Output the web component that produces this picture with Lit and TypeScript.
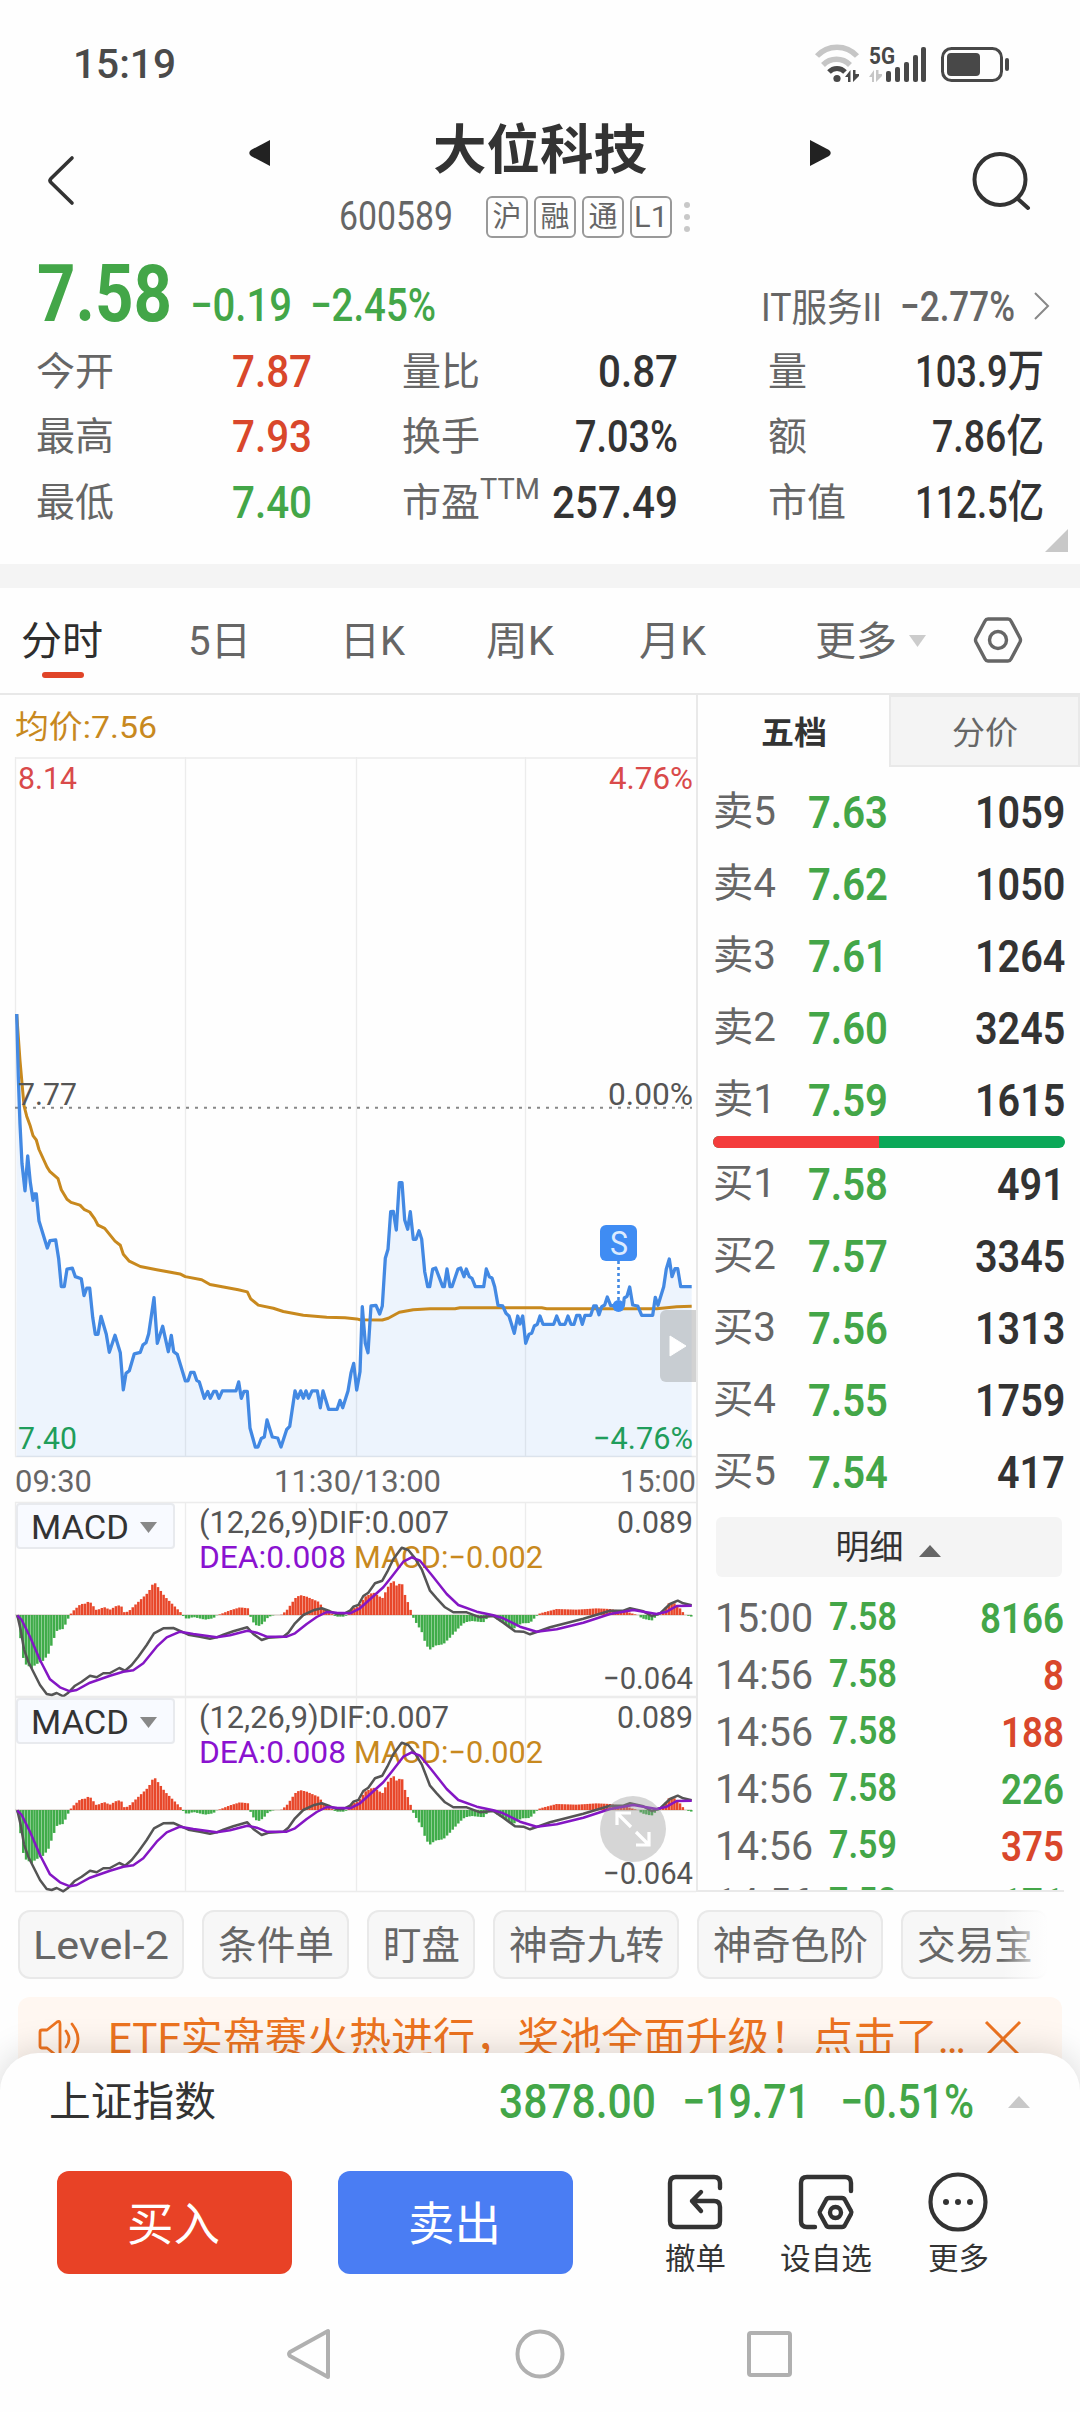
import { LitElement, html, svg, css } from "lit";
import { customElement, property } from "lit/decorators.js";

type Pt = [number, number];

/** Single line of text condensed or widened to a given advance width. */
@customElement("fit-text")
class FitText extends LitElement {
  @property() text = "";
  @property({ type: Number }) w = 0;

  static styles = css`
    :host { display: inline-block; white-space: nowrap; }
    .t { display: inline-block; transform-origin: 0 50%; white-space: pre; }
  `;

  updated() {
    const el = this.renderRoot.querySelector(".t") as HTMLElement;
    el.style.transform = "none";
    if (!this.w) return;
    this.style.width = "auto";
    const natural = el.getBoundingClientRect().width;
    this.style.width = `${this.w}px`;
    if (natural > 0) el.style.transform = `scaleX(${this.w / natural})`;
  }

  render() {
    return html`<span class="t">${this.text}</span>`;
  }
}

const fit = (text: string, w: number, cls = "") =>
  html`<fit-text class=${cls} .text=${text} .w=${w}></fit-text>`;

/* ---- chart series ---- */

const pairs = (s: string): Pt[] =>
  s.trim().split(/\s+/).map((p) => p.split(",").map(Number) as Pt);

const place = (pts: Pt[], ox: number, oy: number, kx: number, ky: number): Pt[] =>
  pts.map(([x, y]) => [ox + x * kx, oy + y * ky]);

const path = (pts: Pt[]) =>
  pts.map(([x, y], i) => `${i ? "L" : "M"}${x.toFixed(1)} ${y.toFixed(1)}`).join("");

const MORNING = pairs(`50,612 55,730 60,820 66,895 75,946 83,880 91,930 99,964 103,952 109,952 117,1003 142,1054 150,1040
 167,1039 176,1075 184,1127 193,1127 201,1094 217,1092 226,1108 244,1112 252,1144 260,1130 269,1130 278,1185 286,1217
 294,1217 303,1183 319,1217 328,1251 345,1219 361,1252 370,1322 378,1291 388,1286 403,1254 421,1251 429,1237 438,1233
 446,1216 462,1148 472,1234 488,1202 505,1250 514,1219 521,1250 532,1255 556,1305 564,1305 572,1289 582,1289 590,1304
 598,1307 613,1338 623,1325 631,1338 641,1325 649,1325 657,1338 667,1324 708,1324 716,1307 724,1338 732,1325 742,1325
 750,1394 766,1430 774,1430 784,1414 793,1411 801,1379 817,1411 833,1413 843,1430 860,1397 869,1391 885,1324 893,1338
 902,1324 910,1338 918,1324 926,1338 936,1324 952,1324 961,1356 969,1324 986,1359 1011,1359 1020,1342 1028,1356
 1044,1324 1053,1290 1061,1272`);

const AFTERNOON = pairs(`50,750 60,695 67,500 76,610 84,638 93,498 108,496 119,522 127,498 136,355 144,328 152,215 160,214
 169,270 178,128 186,128 194,240 203,268 211,215 220,298 228,298 237,272 245,298 254,395 263,440 269,440 278,387 287,384
 308,440 313,440 321,387 330,440 336,440 354,387 362,384 372,410 379,387 388,410 396,415 406,440 431,440 439,387 448,410
 456,414 464,440 474,496 488,498 498,520 507,528 523,580 533,528 540,552 548,528 557,610 567,583 575,580 583,558 592,553
 600,528 609,553 641,553 650,528 660,553 675,553 684,528 693,553 702,553 710,526 719,526 727,553 735,526 752,526 761,498
 769,498 777,524 785,500 794,495 802,471 812,497 850,497 853,474 861,469 869,441 878,495 893,498 905,526 938,526 946,472
 954,496 971,440 979,387 988,357 996,410 1005,386 1013,386 1022,440 1055,440`);

const AVG_AM = pairs(`50,612 60,700 72,785 80,805 90,822 99,842 109,850 117,868 141,901 150,910 174,923 184,944 201,962
 213,968 240,973 252,981 269,986 284,999 294,1011 314,1017 345,1041 361,1049 370,1066 388,1079 421,1089 470,1095 540,1103
 556,1108 605,1114 630,1123 715,1133 742,1137 752,1150 775,1162 820,1168 850,1174 910,1181 980,1185 1035,1186 1070,1188`);

const AVG_PM = pairs(`60,539 127,540 145,535 178,517 220,509 270,506 345,506 360,503 605,503 620,506 950,506 1010,500 1055,499`);

const T = 757;
const am = (p: Pt[]) => place(p, 0, 690 - T, 1 / 3, 1 / 1.889);
const pm = (p: Pt[]) => place(p, 340, 1140 - T, 1 / 3, 1 / 3);
const PRICE = [...am(MORNING), ...pm(AFTERNOON)];
const AVG = [...am(AVG_AM), ...pm(AVG_PM)];

const HIST = pairs(`52,0 60,-60 66,-100 72,-145 97,-160 105,-150 130,-137 145,-118 160,-75 172,-45 190,-42 205,-10 210,0
 217,10 243,34 252,32 268,42 290,14 312,24 330,16 352,29 364,28 368,8 385,10 405,30 445,68 462,100 495,55 515,35 542,8
 548,0 553,-8 562,-12 580,-6 615,-14 640,-10 650,-1 660,2 690,14 720,23 745,20 750,0 756,-18 773,-35 790,-25 805,-6
 820,-1 845,1 860,14 875,35 885,50 900,60 920,55 955,40 975,16 992,8 998,0 1010,-5 1030,-5 1045,0 1055,18 1075,25
 1095,55 1120,68 1147,50 1168,92 1180,103 1190,88 1205,98 1215,60 1230,22 1236,0 1245,-18 1265,-50 1278,-90 1290,-104
 1305,-92 1330,-88 1350,-68 1380,-35 1395,-22 1415,-18 1450,-22 1465,-6 1480,-3 1490,-12 1540,-42 1565,-25 1590,-24
 1605,-8 1613,0 1620,5 1670,18 1730,16 1790,20 1830,18 1880,10 1905,2 1915,0 1925,-10 1955,-17 1970,-3 1985,3 2005,35
 2025,35 2040,20 2055,0 2075,-5`);

const DIF = pairs(`52,376 62,420 72,478 85,515 100,545 120,585 140,612 155,615 170,609 190,619 205,608 225,587 245,575
 270,557 290,562 310,550 330,549 358,534 375,542 395,525 415,500 440,465 462,430 490,415 520,414 545,425 565,434 600,440
 630,446 650,442 670,434 700,424 742,412 760,432 785,450 805,443 850,440 865,428 885,400 910,375 940,361 965,355 990,364
 1010,372 1030,372 1050,362 1060,350 1075,345 1090,318 1105,308 1125,280 1147,272 1162,245 1180,208 1205,173 1225,180
 1245,205 1265,238 1290,302 1310,325 1335,352 1360,367 1400,367 1440,382 1480,378 1510,398 1545,424 1570,425 1590,433
 1610,426 1650,412 1750,386 1830,362 1870,362 1890,355 1930,364 1955,378 1980,370 2010,342 2033,332 2050,340 2075,346`);

const DEA = pairs(`52,376 65,390 90,440 120,510 150,568 180,592 210,604 230,600 270,578 330,557 370,545 400,541 430,520
 470,470 500,442 540,425 580,432 650,442 690,436 742,422 770,428 800,440 860,440 885,430 920,402 950,381 980,366 1010,368
 1050,370 1080,355 1110,328 1150,292 1175,260 1210,215 1235,202 1260,212 1295,255 1340,312 1375,345 1430,365 1480,376
 1510,385 1560,410 1610,425 1670,418 1750,398 1830,372 1900,360 1970,372 2000,365 2030,348 2075,347`);

const ZERO = 113;
const mline = (p: Pt[]) => path(place(p, 0, -12, 1 / 3, 1 / 3));

function valueAt(x: number): number {
  for (let i = 1; i < HIST.length; i++) {
    if (HIST[i][0] >= x) {
      const [x0, y0] = HIST[i - 1];
      const [x1, y1] = HIST[i];
      return y0 + ((y1 - y0) * (x - x0)) / (x1 - x0);
    }
  }
  return 0;
}

const BARS = Array.from({ length: 241 }, (_, i) => {
  const x = 53 + i * 8.42;
  return { x: x / 3, v: valueAt(x) / 3 };
});

/* ---- tables ---- */

const STATS: [string, string, number, string][] = [
  ["今开", "7.87", 80, "up"], ["量比", "0.87", 80, ""], ["量", "103.9万", 129, ""],
  ["最高", "7.93", 80, "up"], ["换手", "7.03%", 103, ""], ["额", "7.86亿", 112, ""],
  ["最低", "7.40", 80, "down"], ["市盈", "257.49", 126, ""], ["市值", "112.5亿", 129, ""],
];
const SELLS: [string, string, string][] = [
  ["卖5", "7.63", "1059"], ["卖4", "7.62", "1050"], ["卖3", "7.61", "1264"],
  ["卖2", "7.60", "3245"], ["卖1", "7.59", "1615"],
];
const BUYS: [string, string, string][] = [
  ["买1", "7.58", "491"], ["买2", "7.57", "3345"], ["买3", "7.56", "1313"],
  ["买4", "7.55", "1759"], ["买5", "7.54", "417"],
];
const TRADES: [string, string, string, string][] = [
  ["15:00", "7.58", "8166", "down"], ["14:56", "7.58", "8", "up"], ["14:56", "7.58", "188", "up"],
  ["14:56", "7.58", "226", "down"], ["14:56", "7.59", "375", "up"], ["14:56", "7.58", "171", "down"],
];
const CHIPS: [string, number, number][] = [
  ["Level-2", 166, 136], ["条件单", 147, 116], ["盯盘", 108, 77],
  ["神奇九转", 186, 155], ["神奇色阶", 186, 155], ["交易宝", 147, 116],
];

@customElement("app-root")
class AppRoot extends LitElement {
  static styles = css`
    :host {
      display: block; width: 1080px; height: 2412px; overflow: hidden; background: #fefefe; color: #333;
      font-family: Roboto, "Noto Sans CJK SC", sans-serif; font-size: 40px; line-height: 1;
    }
    * { box-sizing: border-box; }
    svg { display: block; flex: none; overflow: visible; }
    .up { color: #d9472b; }
    .down { color: #43a648; }

    .status { height: 127px; padding: 1px 70px 0 73px; display: flex; align-items: center; justify-content: space-between; }
    .clock { font-weight: 500; color: #4a4a4a; font-size: 41px; }

    .header { height: 123px; display: grid; grid-template-columns: 249px 582px 1fr; }
    .back { padding: 29px 0 0 47px; }
    .search { padding: 24px 0 0 140px; }
    .title-row { height: 43px; display: flex; align-items: center; justify-content: space-between; }
    .title { font-size: 53px; font-weight: 700; line-height: 43px; margin-top: 5px; }
    .arrow { margin-top: 9px; }
    .code-row { height: 42px; margin-top: 26px; padding-left: 90px; display: flex; align-items: center; }
    .code { font-size: 40px; color: #666; margin-right: 33px; }
    .tag { width: 42px; height: 42px; margin-right: 6px; border: 2px solid #999; border-radius: 6px; color: #666;
      font-size: 29px; display: flex; align-items: center; justify-content: center; }
    .dots { margin-left: 6px; }

    .quote { height: 88px; padding: 0 31px 0 37px; display: flex; align-items: baseline; line-height: 88px; }
    .last { font-size: 80px; font-weight: 700; }
    .chg { font-size: 46px; font-weight: 500; margin-left: 18px; }
    .sector { margin-left: auto; font-size: 38px; color: #666; }
    .sector-chg { margin-left: 18px; font-size: 43px; font-weight: 500; color: #666; }
    .chev { margin-left: 18px; }

    .stats { position: relative; height: 226px; padding: 1px 0 0 37px; display: grid; grid-template-columns: repeat(3, 275px);
      grid-auto-rows: 65.3px; column-gap: 91px; align-content: start; }
    .stat { display: flex; align-items: center; }
    .stat-label { font-size: 39px; color: #666; margin: 2px 0 0 -1px; }
    .stat-val { margin-left: auto; font-size: 45px; font-weight: 500; }
    .ttm { font-size: 29px; color: #666; align-self: flex-start; margin-top: 5px; }
    .corner { position: absolute; left: 1045px; top: 191px; }

    .band { height: 24px; background: #f4f4f4; }
    .tabs { height: 107px; padding-left: 21px; border-bottom: 2px solid #e8e8e8; display: grid;
      grid-template-columns: 167px 152px 146px 153px 176px 94px 65px 60px; align-items: center; color: #666; font-size: 40px; }
    .tabs > fit-text { padding-top: 3px; }
    .tab { height: 105px; padding-top: 3px; display: flex; flex-direction: column; justify-content: center; align-items: flex-start; }
    .on { color: #2e2e2e; position: relative; }
    .on::after { content: ""; position: absolute; left: 21px; top: 84px; width: 42px; height: 6px; border-radius: 3px; background: #e04428; }

    .main { height: 1197px; display: flex; }
    .left { width: 698px; border-right: 2px solid #e9e9e9; color: #555; font-size: 31px; }
    .avg { height: 62px; padding: 2px 0 0 15px; display: flex; align-items: center; color: #c8891e; font-size: 32px; }
    .plot { position: relative; height: 700px; }
    .lbl { position: absolute; }
    .l { left: 18px; }
    .r { right: 3px; }
    .y1 { top: 6px; } .y2 { top: 322px; } .y3 { top: 666px; }
    .red { color: #d94a4a; }
    .grn { color: #1f9d5b; }
    .handle { position: absolute; left: 660px; top: 553px; width: 36px; height: 72px; border-radius: 6px 0 0 6px;
      background: rgba(150, 150, 150, .42); display: flex; align-items: center; justify-content: center; }
    .flag { position: absolute; left: 600px; top: 468px; width: 37px; height: 36px; border-radius: 6px; background: #3f8cf3;
      color: #dcebff; font-size: 33px; display: flex; align-items: center; justify-content: center; }
    .times { height: 45px; padding: 2px 0 0 15px; display: flex; align-items: center; justify-content: space-between;
      color: #666; font-size: 32px; }
    .noon { margin-left: 2px; }

    .macd { position: relative; height: 195px; }
    .gfx { position: absolute; inset: 0; }
    .pick { position: absolute; left: 16px; top: 1px; width: 159px; height: 46px; border: 2px solid #e8eaee; border-radius: 4px;
      background: #f8faff; padding: 2px 0 0 13px; display: flex; align-items: center; gap: 11px; color: #333; font-size: 34px; }
    .legend { position: absolute; left: 199px; top: 3px; }
    .row { height: 35px; display: flex; align-items: center; gap: 8px; }
    .purple { color: #8a12d0; }
    .gold { color: #c8891e; }
    .hi { position: absolute; right: 3px; top: 5px; }
    .lo { position: absolute; right: 3px; top: 161px; }
    .expand { position: absolute; left: 600px; top: 99px; }

    .right { flex: 1; display: flex; flex-direction: column; }
    .books { height: 72px; display: grid; grid-template-columns: 191px 1fr; font-size: 32px; }
    .book { display: flex; align-items: center; justify-content: center; padding-top: 3px; }
    .book-on { font-weight: 700; }
    .book-off { background: #f4f4f4; border: 2px solid #e9e9e9; color: #666; }
    .levels { padding: 9px 15px 0 15px; }
    .buys { padding-top: 0; }
    .level { height: 72px; display: grid; grid-template-columns: 95px 1fr auto; align-items: center; font-size: 45px; }
    .lv { font-size: 40px; color: #666; }
    .b { font-weight: 600; }
    .ratio { display: flex; width: 352px; height: 12px; margin: 0 0 0 15px; border-radius: 6px; overflow: hidden; background: #0ba858; }
    .ratio-buy { width: 166px; background: #f43c3c; }
    .detail { width: 346px; height: 60px; margin: 9px 0 0 18px; border-radius: 6px; background: #f4f4f4; display: flex;
      align-items: center; justify-content: center; gap: 15px; font-size: 34px; padding-right: 2px; }
    .detail-tri { margin-top: 8px; }
    .trades { flex: 1; overflow: hidden; width: 366px; padding: 13px 0 0 17px; border-bottom: 2px solid #e9e9e9; }
    .trade { height: 57px; display: grid; grid-template-columns: 114px 1fr auto; align-items: center; }
    .tm { color: #666; font-size: 41px; }
    .tp { font-size: 39px; margin-top: -3px; }
    .tq { font-size: 42px; }

    .chips { position: relative; width: 1048px; height: 87px; padding: 18px 0 0 18px; display: flex; gap: 18px; }
    .chips::after { content: ""; position: absolute; right: 0; top: 14px; width: 46px; height: 76px;
      background: linear-gradient(to right, rgba(254, 254, 254, 0), #fefefe); }
    .chip { flex: none; height: 69px; padding-top: 3px; border: 2px solid #e9e9e9; border-radius: 12px; background: #f7f7f7; color: #666;
      font-size: 39px; display: flex; align-items: center; justify-content: center; }
    .banner { margin: 18px 18px -24px; height: 80px; border-radius: 12px; background: #fff7f1; color: #ec7320; font-size: 42px;
      display: flex; align-items: center; padding: 3px 0 0 20px; }
    .banner-text { margin: 0 19px 0 26px; }

    .sheet { position: relative; height: 359px; border-radius: 38px 38px 0 0; background: #fefefe; box-shadow: 0 -2px 34px rgba(0, 0, 0, .15); }
    .index { height: 96px; padding: 1px 50px 0 49px; display: flex; align-items: center; font-size: 41px; }
    .i0 { margin-top: 2px; } .i1 { margin-left: auto; } .i2 { margin-left: 26px; } .i3 { margin-left: 30px; }
    .num { font-size: 48px; font-weight: 500; }
    .i-tri { margin-left: 34px; }
    .actions { height: 147px; padding: 22px 0 0 57px; display: flex; }
    .btn { width: 235px; height: 103px; border-radius: 12px; margin-right: 46px; color: #fff; font-size: 46px; display: flex;
      align-items: center; justify-content: center; padding: 3px 2px 0 0; }
    .buy { background: #e84226; }
    .sell { background: #4a7df3; }
    .tools { margin-left: 11px; display: grid; grid-template-columns: 130px 132px 132px; }
    .tool { display: flex; flex-direction: column; align-items: center; font-size: 30px; }
    .tool-label { margin-top: 11px; }
    .nav { height: 116px; display: flex; align-items: center; padding-left: 284px; }
    .n2 { margin-left: 180px; } .n3 { margin-left: 180px; }
  `;

  private statusIcons() {
    return svg`<g fill="none" stroke-linecap="butt">
      <path d="M3 17 A27 27 0 0 1 43 17" stroke="#c6c6c6" stroke-width="5.500"/>
      <path d="M9 26 A19 19 0 0 1 36 26" stroke="#c6c6c6" stroke-width="5.500"/>
      <path d="M15 33 A11 11 0 0 1 31 33" stroke="#484848" stroke-width="5"/></g>
      <circle cx="23" cy="39.500" r="3.600" fill="#484848"/>
      <path d="M31 38L36.500 31V43H34V38Z M39 31V43L45 37V35H41.500V31Z" fill="#484848"/>
      <path d="M55 38L60 31V43H58V38Z M62 31V43L68 37V35H64.500V31Z" fill="#c6c6c6"/>
      <g fill="#484848"><rect x="72" y="32" width="5" height="11" rx="2"/><rect x="81" y="28" width="5" height="15" rx="2"/>
      <rect x="90" y="23" width="5" height="20" rx="2"/><rect x="99" y="16" width="5" height="27" rx="2"/><rect x="107" y="8" width="5" height="35" rx="2"/></g>
      <text x="55" y="25" font-size="23" font-weight="700" fill="#484848" textLength="26" lengthAdjust="spacingAndGlyphs">5G</text>
      <rect x="128.500" y="9.500" width="59" height="32" rx="9" fill="none" stroke="#484848" stroke-width="3"/>
      <rect x="133" y="14" width="33" height="23" rx="4" fill="#484848"/><rect x="191" y="19" width="4" height="13" rx="2" fill="#484848"/>`;
  }

  private macd(last: boolean) {
    const zeroX = 15;
    return html`<div class="macd">
      <svg class="gfx" width="697" height="195" viewBox="0 0 697 195">
        <path d="M15 .5H696M15.500 0V195M185.500 0V195M356.500 0V195M525.500 0V195M15 194.500H696" stroke="#ececec" stroke-width="1.300" fill="none"/>
        <path d="M${zeroX} ${ZERO}H692" stroke="#c9beb4" stroke-width="1"/>
        ${BARS.map((b) => Math.abs(b.v) < 0.25 ? "" : svg`<rect x=${b.x - 1.25} y=${b.v > 0 ? ZERO - b.v : ZERO} width="2.500"
          height=${Math.abs(b.v)} fill=${b.v > 0 ? "#e8472a" : "#3fac49"}/>`)}
      </svg>
      <div class="legend">
        <div class="row">${fit("(12,26,9)DIF:0.007", 250)}</div>
        <div class="row">${fit("DEA:0.008", 147, "purple")}${fit("MACD:−0.002", 189, "gold")}</div>
      </div>
      <svg class="gfx" width="697" height="195" viewBox="0 0 697 195" fill="none" stroke-width="2.500" stroke-linejoin="round">
        <path d=${mline(DIF)} stroke="#555"/><path d=${mline(DEA)} stroke="#8416c4"/>
      </svg>
      <div class="pick">${fit("MACD", 98)}<svg width="17" height="11"><path d="M0 0H17L8.500 11Z" fill="#888"/></svg></div>
      ${fit("0.089", 76, "hi")}${fit("−0.064", 90, "lo")}
      ${last ? html`<svg class="expand" width="66" height="66" viewBox="0 0 66 66"><circle cx="33" cy="33" r="33" fill="rgba(150,150,150,.38)"/>
        <path d="M31 31L17 17M17 29V17H31M36 36L49 49M49 36V49H36" stroke="#fff" stroke-width="3.200" fill="none"/></svg>` : ""}
    </div>`;
  }

  private level([a, p, q]: [string, string, string]) {
    return html`<div class="level">${fit(a, 63, "lv")}${fit(p, 80, "down b")}${fit(q, q.length * 22.6, "b")}</div>`;
  }

  render() {
    const end = PRICE[PRICE.length - 1][0];
    return html`
      <div class="status">${fit("15:19", 103, "clock")}
        <svg width="196" height="50" viewBox="0 0 196 50">${this.statusIcons()}</svg></div>

      <div class="header">
        <div class="back"><svg width="28" height="50" viewBox="0 0 28 50"><path d="M25 2L4 22.500Q2 24.500 4 26.500L25 47" fill="none" stroke="#333" stroke-width="3.600" stroke-linecap="round"/></svg></div>
        <div>
          <div class="title-row">
            <svg class="arrow" width="21" height="26" viewBox="0 0 21 26"><path d="M21 0V26L2 16Q-1.500 13 2 10Z" fill="#222"/></svg>
            ${fit("大位科技", 214, "title")}
            <svg class="arrow" width="21" height="26" viewBox="0 0 21 26"><path d="M0 0V26L19 16Q22.500 13 19 10Z" fill="#222"/></svg>
          </div>
          <div class="code-row">${fit("600589", 114, "code")}
            ${["沪", "融", "通", "L1"].map((t) => html`<div class="tag">${t === "L1" ? fit(t, 34) : t}</div>`)}
            <svg class="dots" width="6" height="32" viewBox="0 0 6 32" fill="#c8c8c8"><circle cx="3" cy="4" r="3"/><circle cx="3" cy="16" r="3"/><circle cx="3" cy="28" r="3"/></svg>
          </div>
        </div>
        <div class="search"><svg width="60" height="60" viewBox="0 0 60 60" fill="none" stroke="#333" stroke-width="4"><circle cx="29" cy="28.500" r="25.500"/><path d="M47 48L57 57" stroke-linecap="round"/></svg></div>
      </div>

      <div class="quote">
        ${fit("7.58", 135, "last down")}${fit("−0.19", 102, "chg down")}${fit("−2.45%", 126, "chg down")}
        ${fit("IT服务II", 121, "sector")}${fit("−2.77%", 115, "sector-chg")}
        <svg class="chev" width="16" height="28" viewBox="0 0 16 28"><path d="M2 0L15 13L2 26" fill="none" stroke="#888" stroke-width="2"/></svg>
      </div>
      <div class="stats">
        ${STATS.map(([l, v, w, c]) => html`<div class="stat">${fit(l, l.length * 39, "stat-label")}
          ${l === "市盈" ? fit("TTM", 60, "ttm") : ""}${fit(v, w, `stat-val ${c}`)}</div>`)}
        <svg class="corner" width="23" height="23"><path d="M23 0V23H0Z" fill="#c8c8c8"/></svg>
      </div>
      <div class="band"></div>

      <div class="tabs">
        <div class="tab on">${fit("分时", 82)}</div>${fit("5日", 63)}${fit("日K", 65)}${fit("周K", 68)}${fit("月K", 67)}${fit("更多", 82)}
        <svg width="17" height="12"><path d="M0 0H17L8.500 12Z" fill="#ccc"/></svg>
        <svg width="48" height="46" viewBox="0 0 48 46" fill="none" stroke="#666" stroke-width="3.400"><path d="M14 1H34Q36 1 37 3L46 20Q47 22 46 24L37 41Q36 43 34 43H14Q12 43 11 41L2 24Q1 22 2 20L11 3Q12 1 14 1Z"/><circle cx="24" cy="22" r="8.500"/></svg>
      </div>

      <div class="main">
        <div class="left">
          <div class="avg">${fit("均价:7.56", 142)}</div>
          <div class="plot">
            <svg width="697" height="700" viewBox="0 0 697 700" fill="none">
              <path d="M15 1H696M15.500 0V700M185.500 0V700M356.500 0V700M525.500 0V700M15 699.500H696" stroke="#ececec" stroke-width="1.300"/>
              <path d="M15 350.700H692" stroke="#888" stroke-width="2" stroke-dasharray="3 6"/>
              <path d="${path(PRICE)}L${end} 700L16.500 700Z" fill="rgba(66,140,240,.09)"/>
              <path d=${path(AVG)} stroke="#c8891e" stroke-width="3" stroke-linejoin="round"/>
              <path d=${path(PRICE)} stroke="#4389e3" stroke-width="3.300" stroke-linejoin="round"/>
              <path d="M618.500 504V546" stroke="#4389e3" stroke-width="2.600" stroke-dasharray="3 3"/>
              <circle cx="618.500" cy="549" r="6" fill="#3f8cf3"/>
            </svg>
            ${fit("8.14", 59, "lbl l y1 red")}${fit("4.76%", 84, "lbl r y1 red")}
            ${fit("7.77", 59, "lbl l y2")}${fit("0.00%", 85, "lbl r y2")}
            ${fit("7.40", 59, "lbl l y3 grn")}${fit("−4.76%", 100, "lbl r y3 grn")}
            <div class="flag">${fit("S", 18)}</div>
            <div class="handle"><svg width="18" height="22" viewBox="0 0 18 22"><path d="M1 1L17 11L1 21Z" fill="#fff" stroke="#fff" stroke-linejoin="round"/></svg></div>
          </div>
          <div class="times">${fit("09:30", 77)}${fit("11:30/13:00", 167, "noon")}${fit("15:00", 76)}</div>
          ${this.macd(false)}${this.macd(true)}
        </div>

        <div class="right">
          <div class="books">
            <div class="book book-on">${fit("五档", 66)}</div><div class="book book-off">${fit("分价", 66)}</div>
          </div>
          <div class="levels">${SELLS.map((r) => this.level(r))}</div>
          <div class="ratio"><div class="ratio-buy"></div></div>
          <div class="levels buys">${BUYS.map((r) => this.level(r))}</div>
          <div class="detail">${fit("明细", 68)}<svg class="detail-tri" width="22" height="12"><path d="M11 0L22 12H0Z" fill="#666"/></svg></div>
          <div class="trades">${TRADES.map(([t, p, q, c]) => html`<div class="trade">
            ${fit(t, 98, "tm")}${fit(p, 68, "tp down b")}${fit(q, q.length * 21, `tq b ${c}`)}</div>`)}</div>
        </div>
      </div>

      <div class="chips">${CHIPS.map(([t, w, tw]) => html`<div class="chip" style="width:${w}px">${fit(t, tw)}</div>`)}</div>
      <div class="banner">
        <svg width="44" height="40" viewBox="0 0 44 40" fill="none" stroke="currentColor" stroke-width="2.800" stroke-linejoin="round" stroke-linecap="round"><path d="M2 13Q2 11 4 11H9L19 3Q22 1 22 5V35Q22 39 19 37L9 29H4Q2 29 2 27Z"/><path d="M28 12Q34 20 28 28M34 5Q46 20 34 35"/></svg>
        ${fit("ETF实盘赛火热进行，奖池全面升级！点击了…", 858, "banner-text")}
        <svg width="36" height="36" viewBox="0 0 36 36"><path d="M1 1L35 35M35 1L1 35" stroke="currentColor" stroke-width="3"/></svg>
      </div>

      <div class="sheet">
        <div class="index">${fit("上证指数", 167, "i0")}
          ${fit("3878.00", 157, "num down i1")}${fit("−19.71", 128, "num down i2")}${fit("−0.51%", 134, "num down i3")}
          <svg class="i-tri" width="22" height="12"><path d="M11 0L22 12H0Z" fill="#c8c8c8"/></svg>
        </div>
        <div class="actions">
          <div class="btn buy">${fit("买入", 93)}</div><div class="btn sell">${fit("卖出", 93)}</div>
          <div class="tools">
            <div class="tool"><svg width="62" height="62" viewBox="0 0 62 62" fill="none" stroke="#333" stroke-width="4.400" stroke-linecap="round" stroke-linejoin="round"><path d="M56 17V12Q56 6 50 6H12Q6 6 6 12V50Q6 56 12 56H50Q56 56 56 50V36Q56 30 50 30H28M37 21L28 30L37 40"/></svg>${fit("撤单", 61, "tool-label")}</div>
            <div class="tool"><svg width="62" height="62" viewBox="0 0 62 62" fill="none" stroke="#333" stroke-width="4.400" stroke-linecap="round" stroke-linejoin="round"><path d="M56 20V12Q56 6 50 6H12Q6 6 6 12V50Q6 56 12 56H20"/><path d="M34 27H47Q49 27 50 29L56 40Q57 41.500 56 43L50 54Q49 56 47 56H34Q32 56 31 54L25 43Q24 41.500 25 40L31 29Q32 27 34 27Z"/><circle cx="40.500" cy="41.500" r="5.500"/></svg>${fit("设自选", 92, "tool-label")}</div>
            <div class="tool"><svg width="62" height="62" viewBox="0 0 62 62"><circle cx="31" cy="31" r="27.500" fill="none" stroke="#333" stroke-width="4.200"/><g fill="#333"><circle cx="19" cy="31" r="3"/><circle cx="31" cy="31" r="3"/><circle cx="43" cy="31" r="3"/></g></svg>${fit("更多", 61, "tool-label")}</div>
          </div>
        </div>
        <div class="nav">
          <svg width="50" height="54" viewBox="0 0 50 54" fill="none" stroke="#b0b0b0" stroke-width="4" stroke-linejoin="round"><path d="M44 4V50L6 29Q4 27 6 25Z"/></svg>
          <svg class="n2" width="52" height="52" viewBox="0 0 52 52"><circle cx="26" cy="26" r="22.500" fill="none" stroke="#b0b0b0" stroke-width="4"/></svg>
          <svg class="n3" width="46" height="46" viewBox="0 0 46 46"><rect x="3" y="2" width="41" height="42" rx="2" fill="none" stroke="#b0b0b0" stroke-width="4"/></svg>
        </div>
      </div>`;
  }
}
